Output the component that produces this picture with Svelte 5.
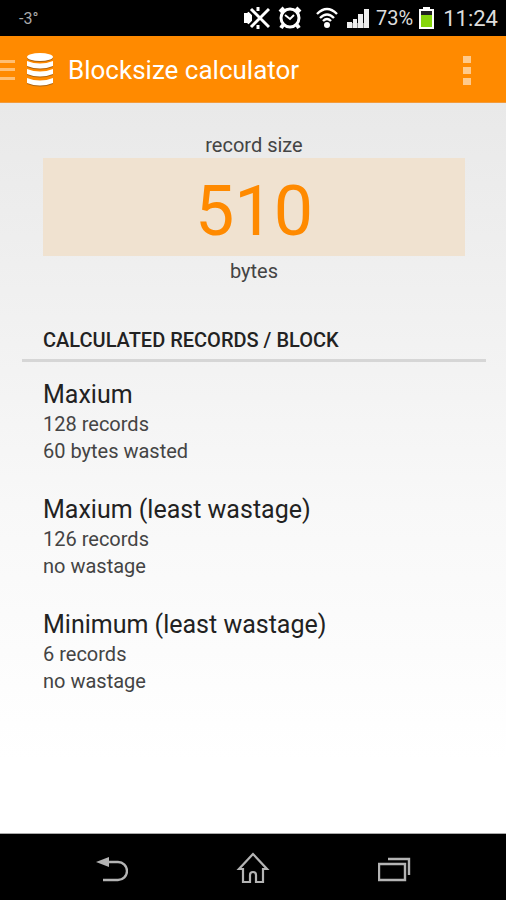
<script lang="ts">
  const BLOCK_RESULTS = [
    { title: 'Maxium', records: 128, wasted: 60 },
    { title: 'Maxium (least wastage)', records: 126, wasted: 0 },
    { title: 'Minimum (least wastage)', records: 6, wasted: 0 },
  ];

  let recordSize = $state('510');

  function wastage(bytes: number): string {
    return bytes > 0 ? `${bytes} bytes wasted` : 'no wastage';
  }
</script>

<div class="screen">
  <div class="status-bar">
    <span class="temperature">-3°</span>
    <div class="status-icons">
      <svg width="26" height="24" viewBox="0 0 26 24" aria-hidden="true">
        <path d="M0 7h3l5-4v18l-5-4H0z" fill="#fff" />
        <path d="M5 2l20 20M25 2L5 22" stroke="#000" stroke-width="6" />
        <path d="M7 3l18 18M25 3L7 21" stroke="#fff" stroke-width="3" />
        <path d="M14 1v4M14 19v4" stroke="#fff" stroke-width="3" />
      </svg>
      <svg class="alarm" width="24" height="24" viewBox="0 0 24 24" fill="none" stroke="#fff" aria-hidden="true">
        <circle cx="12" cy="12" r="9" stroke-width="3" />
        <path d="M2 6l4-4M22 6l-4-4M5 19l-2 3M19 19l2 3" stroke-width="4" />
        <path d="M7 9l5 4 4-4" stroke-width="2" />
      </svg>
      <svg class="wifi" width="22" height="22" viewBox="0 0 22 22" fill="none" stroke="#fff" aria-hidden="true">
        <path d="M1 7Q11-3 21 7M4 11q7-7 14 0M7 14q4-4 8 0" stroke-width="2.4" />
        <circle cx="11" cy="18" r="3" fill="#fff" stroke="none" />
      </svg>
      <svg class="signal" width="23" height="20" viewBox="0 0 23 20" fill="#eee" aria-hidden="true">
        <path d="M0 14h5v6H0zM6 11h4v9H6zM11 6h5v14h-5zM17 1h5v19h-5z" />
        <path d="M0 15h22v5H0z" opacity="0.6" />
      </svg>
      <span class="percent">73%</span>
      <svg class="battery" width="15" height="22" viewBox="0 0 15 22" aria-hidden="true">
        <path d="M4 0h7v3H4z" fill="#fff" />
        <path d="M1 3h13v18H1z" fill="#222" stroke="#fff" stroke-width="2" />
        <path d="M2 8h11v12H2z" fill="#86d60b" />
      </svg>
      <span class="clock">11:24</span>
    </div>
  </div>

  <header class="action-bar">
    <button class="drawer-btn" aria-label="Open menu">
      <svg width="15" height="24" viewBox="0 0 15 24" fill="#fff" opacity="0.45">
        <path d="M0 2h15v3H0zM0 10h15v3H0zM0 19h15v3H0z" />
      </svg>
      <svg width="28" height="38" viewBox="0 0 28 38">
        <g fill="#855117" opacity="0.65" transform="translate(0 1)">
          <ellipse cx="14" cy="6" rx="13" ry="4" />
          <path d="M1 10q13 5 26 0v5q-13 5-26 0zM1 18q13 5 26 0v5q-13 5-26 0zM1 27q13 5 26 0v5q-13 5-26 0z" />
        </g>
        <g fill="#fff">
          <ellipse cx="14" cy="6" rx="13" ry="4" />
          <path d="M1 10q13 5 26 0v5q-13 5-26 0zM1 18q13 5 26 0v5q-13 5-26 0zM1 27q13 5 26 0v5q-13 5-26 0z" />
        </g>
      </svg>
    </button>
    <h1>Blocksize calculator</h1>
    <button class="overflow-btn" aria-label="More options">
      <svg width="8" height="29" viewBox="0 0 8 29" fill="#fff" opacity="0.55">
        <path d="M0 0h8v7H0zM0 11h8v7H0zM0 22h8v7H0z" />
      </svg>
    </button>
  </header>

  <main>
    <div class="size-field">
      <label for="record-size">record size</label>
      <input
        id="record-size"
        type="text"
        inputmode="numeric"
        bind:value={recordSize}
        aria-describedby="size-unit"
      />
      <span id="size-unit">bytes</span>
    </div>

    <h2>CALCULATED RECORDS / BLOCK</h2>

    <div class="results">
      {#each BLOCK_RESULTS as result}
        <section>
          <h3>{result.title}</h3>
          <p>{result.records} records</p>
          <p>{wastage(result.wasted)}</p>
        </section>
      {/each}
    </div>
  </main>

  <nav class="nav-bar">
    <button aria-label="Back">
      <svg width="34" height="28" viewBox="0 0 34 28">
        <path d="M13 7h11a8 8 0 0 1 0 18H9" fill="none" stroke="#b4b4b4" stroke-width="2.4" />
        <path d="M2 7l13-5v10z" fill="#b4b4b4" />
      </svg>
    </button>
    <button aria-label="Home">
      <svg width="34" height="34" viewBox="0 0 34 34" fill="none" stroke="#b4b4b4" stroke-width="2.2">
        <path d="M17 2L3 17h4v13h7v-7q0-3 3-3t3 3v7h7V17h4z" />
      </svg>
    </button>
    <button aria-label="Recent apps">
      <svg width="34" height="28" viewBox="0 0 34 28" fill="none" stroke="#b4b4b4" stroke-width="2.4">
        <path d="M1 9h26v16H1zM10 4h21v16" />
      </svg>
    </button>
  </nav>
</div>

<style>
  :global(body) {
    margin: 0;
  }

  .screen {
    min-height: 100vh;
    display: flex;
    flex-direction: column;
    font-family: Roboto, 'Noto Sans', sans-serif;
    color: #222;
  }

  .status-bar {
    display: flex;
    align-items: center;
    justify-content: space-between;
    height: 36px;
    padding: 0 8px 0 19px;
    background: #000;
    color: #ddd;
  }

  .temperature {
    font-size: 16px;
    color: #aaa;
  }

  .status-icons {
    display: flex;
    align-items: center;
  }

  .alarm {
    margin-left: 8px;
  }

  .wifi {
    margin-left: 14px;
  }

  .signal {
    margin-left: 9px;
  }

  .percent {
    margin-left: 6px;
    font-size: 20px;
  }

  .battery {
    margin-left: 6px;
  }

  .clock {
    margin-left: 9px;
    font-size: 22px;
  }

  .action-bar {
    display: flex;
    align-items: center;
    height: 67px;
    box-sizing: border-box;
    padding-top: 2px;
    background: #ff8a00;
    border-bottom: 1px solid #f39b3b;
    color: #fff;
  }

  button {
    display: flex;
    align-items: center;
    justify-content: center;
    padding: 0;
    border: none;
    background: none;
    cursor: pointer;
  }

  .drawer-btn {
    gap: 11px;
    height: 100%;
  }

  h1 {
    flex: 1;
    margin: 0 0 0 14px;
    font-size: 26px;
    font-weight: 400;
  }

  .overflow-btn {
    width: 78px;
    height: 100%;
  }

  main {
    flex: 1;
    padding: 30px 20px 24px 22px;
    background: linear-gradient(#e9e9e9, #f8f8f8 55%, #fff 90%);
  }

  .size-field {
    display: flex;
    flex-direction: column;
    align-items: center;
    padding: 0 21px;
    font-size: 20px;
    line-height: 25px;
    color: #444;
  }

  .size-field input {
    width: 100%;
    height: 98px;
    box-sizing: border-box;
    padding: 8px 0 0;
    border: none;
    outline: none;
    background: #f0e2d0;
    color: #ff8a00;
    font-family: inherit;
    font-size: 70px;
    text-align: center;
  }

  .size-field span {
    padding-top: 3px;
  }

  h2 {
    margin: 42px 0 0;
    padding: 0 21px 5px;
    border-bottom: 3px solid #d6d6d6;
    font-size: 20px;
    font-weight: 500;
    line-height: 28px;
  }

  .results {
    display: flex;
    flex-direction: column;
    gap: 28px;
    padding: 16px 21px 0;
  }

  h3 {
    margin: 0;
    font-size: 25px;
    font-weight: 400;
    line-height: 33px;
  }

  p {
    margin: 0;
    font-size: 20px;
    line-height: 27px;
    color: #444;
  }

  .nav-bar {
    display: flex;
    justify-content: center;
    height: 67px;
    box-sizing: border-box;
    padding-top: 4px;
    border-top: 1px solid #aaa;
    background: #000;
  }

  .nav-bar button {
    width: 28%;
    height: 100%;
  }
</style>
